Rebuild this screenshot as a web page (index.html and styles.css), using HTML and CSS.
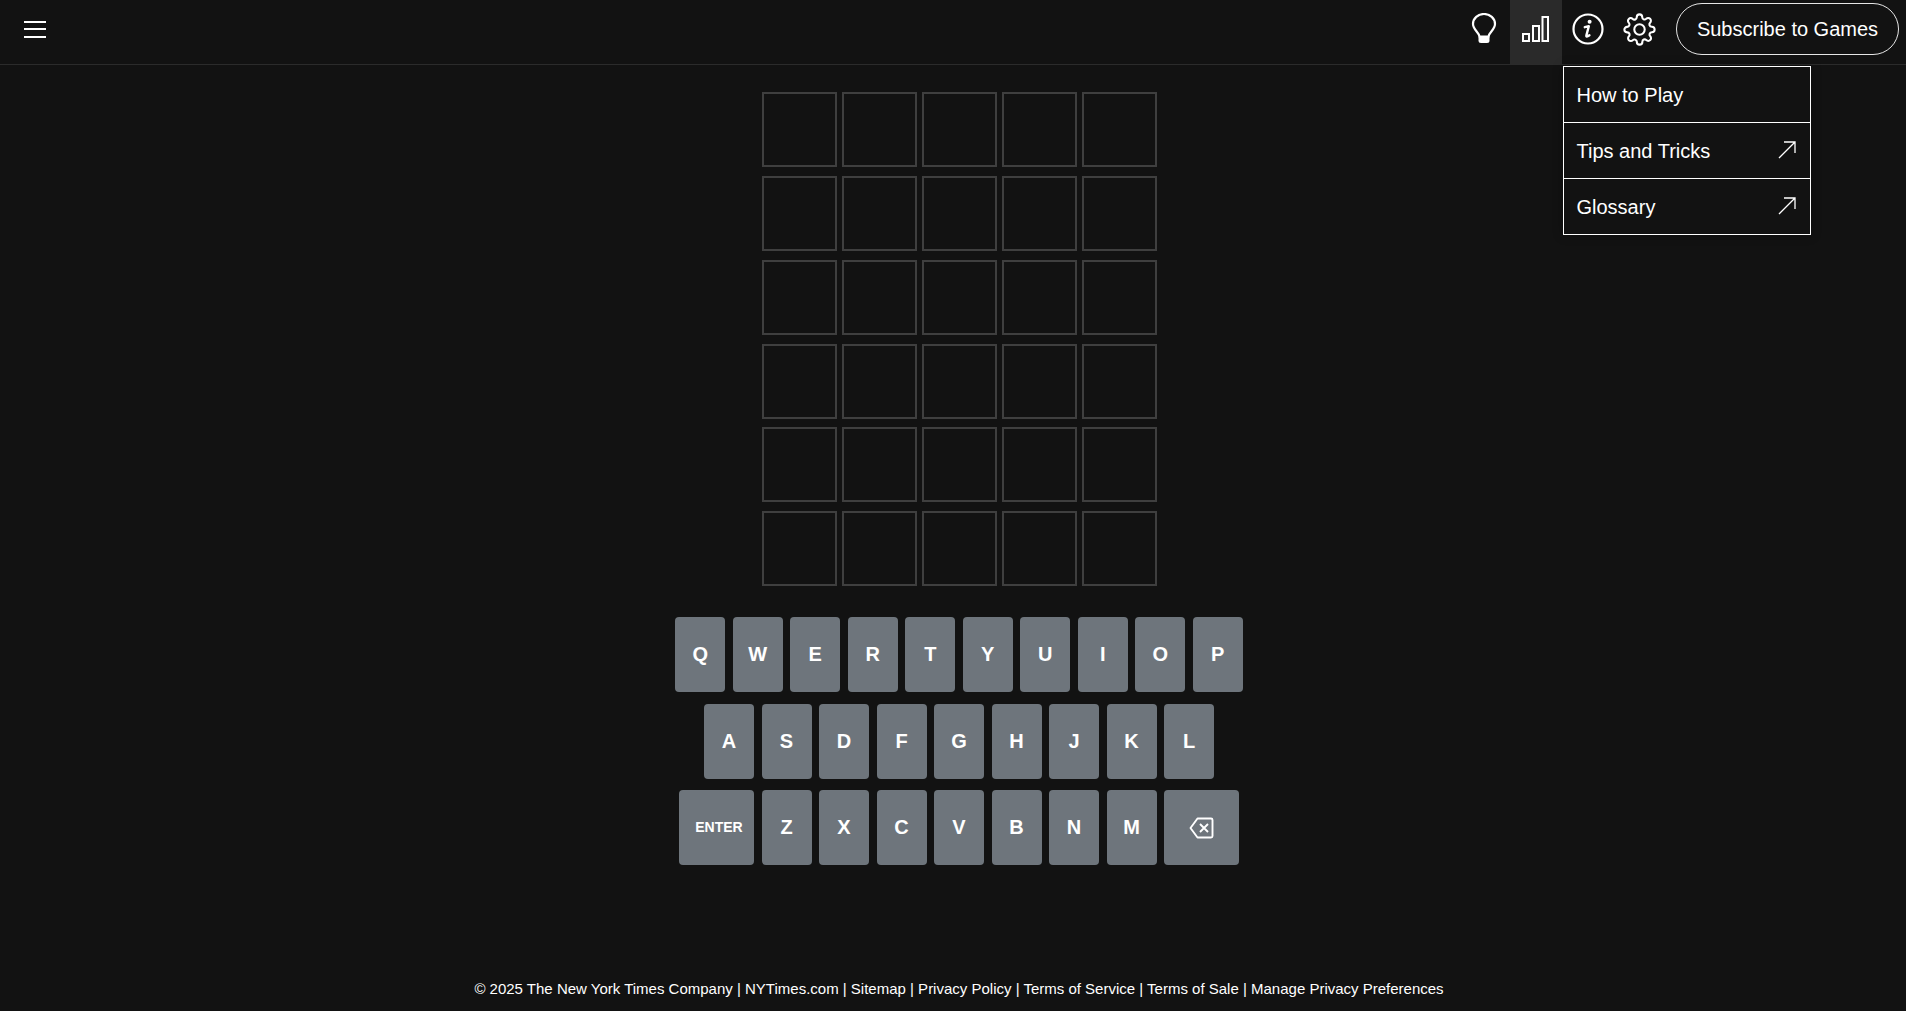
FILE: index.html
```html
<!DOCTYPE html>
<html lang="en">
<head>
  <meta charset="UTF-8" />
  <meta name="viewport" content="width=device-width, initial-scale=1.0"/>
  <title>Wordle</title>
  <link rel="stylesheet" href="styles.css">
</head>
<body>
  <header class="top-bar">
    <button class="menu-btn" aria-label="Menu">
      <span></span><span></span><span></span>
    </button>
    <div class="top-actions">
      <button class="icon-btn" aria-label="Hints">
        <svg width="26" height="32" viewBox="0 0 26 32" fill="none" stroke="#fff" stroke-width="2.2">
          <path d="M8.5 23.5C8 19.5 2 16.5 2 11a11 10 0 0 1 22 0c0 5.500-6 8.500-6.500 12.500z"/>
          <path d="M7.500 23.500h11v4a2.500 2.500 0 0 1-2.500 2.500h-6a2.500 2.500 0 0 1-2.500-2.500z" fill="#fff" stroke="none"/>
        </svg>
      </button>
      <button class="icon-btn active" aria-label="Statistics">
        <svg width="28" height="26" viewBox="0 0 28 26" fill="none" stroke="#fff" stroke-width="2">
          <rect x="1" y="18" width="6" height="7"/>
          <rect x="11" y="10" width="6" height="15"/>
          <rect x="20.500" y="1" width="5.500" height="24"/>
        </svg>
      </button>
      <button class="icon-btn" aria-label="Help">
        <svg width="32" height="32" viewBox="0 0 32 32" fill="none" stroke="#fff">
          <circle cx="16" cy="16" r="14.500" stroke-width="2.200"/>
          <path d="M12.800 14.200l4-1-2.400 9.200c-.3 1.300.6 1.700 3-.1" stroke-width="2.400" stroke-linecap="round" stroke-linejoin="round"/>
          <circle cx="17.600" cy="8.800" r="2" fill="#fff" stroke="none"/>
        </svg>
      </button>
      <button class="icon-btn gear" aria-label="Settings">
        <svg width="33" height="33" viewBox="0 0 24 24" fill="none" stroke="#fff" stroke-width="1.500" stroke-linecap="round" stroke-linejoin="round">
          <circle cx="12" cy="12" r="3.800"/>
          <path d="M19.400 15a1.650 1.650 0 0 0 .33 1.820l.06.06a2 2 0 0 1 0 2.830 2 2 0 0 1-2.830 0l-.06-.06a1.650 1.650 0 0 0-1.820-.33 1.650 1.650 0 0 0-1 1.510V21a2 2 0 0 1-2 2 2 2 0 0 1-2-2v-.09A1.650 1.650 0 0 0 9 19.400a1.650 1.650 0 0 0-1.820.33l-.06.06a2 2 0 0 1-2.830 0 2 2 0 0 1 0-2.830l.06-.06a1.650 1.650 0 0 0 .33-1.820 1.650 1.650 0 0 0-1.510-1H3a2 2 0 0 1-2-2 2 2 0 0 1 2-2h.09A1.650 1.650 0 0 0 4.600 9a1.650 1.650 0 0 0-.33-1.820l-.06-.06a2 2 0 0 1 0-2.830 2 2 0 0 1 2.830 0l.06.06a1.650 1.650 0 0 0 1.820.33H9a1.650 1.650 0 0 0 1-1.510V3a2 2 0 0 1 2-2 2 2 0 0 1 2 2v.09a1.650 1.650 0 0 0 1 1.510 1.650 1.650 0 0 0 1.820-.33l.06-.06a2 2 0 0 1 2.830 0 2 2 0 0 1 0 2.830l-.06.06a1.650 1.650 0 0 0-.33 1.820V9a1.650 1.650 0 0 0 1.510 1H21a2 2 0 0 1 2 2 2 2 0 0 1-2 2h-.09a1.650 1.650 0 0 0-1.510 1z"/>
        </svg>
      </button>
      <button class="subscribe-btn">Subscribe to Games</button>
    </div>
    <nav class="help-menu">
      <a class="help-item" href="#">How to Play</a>
      <a class="help-item" href="#">Tips and Tricks
        <svg width="18" height="18" viewBox="0 0 18 18" fill="none" stroke="#fff" stroke-width="1.300"><path d="M1 17L17 1M6 1h11v11"/></svg>
      </a>
      <a class="help-item" href="#">Glossary
        <svg width="18" height="18" viewBox="0 0 18 18" fill="none" stroke="#fff" stroke-width="1.300"><path d="M1 17L17 1M6 1h11v11"/></svg>
      </a>
    </nav>
  </header>

  <main class="game">
    <div class="board">
      <div class="tile"></div><div class="tile"></div><div class="tile"></div><div class="tile"></div><div class="tile"></div>
      <div class="tile"></div><div class="tile"></div><div class="tile"></div><div class="tile"></div><div class="tile"></div>
      <div class="tile"></div><div class="tile"></div><div class="tile"></div><div class="tile"></div><div class="tile"></div>
      <div class="tile"></div><div class="tile"></div><div class="tile"></div><div class="tile"></div><div class="tile"></div>
      <div class="tile"></div><div class="tile"></div><div class="tile"></div><div class="tile"></div><div class="tile"></div>
      <div class="tile"></div><div class="tile"></div><div class="tile"></div><div class="tile"></div><div class="tile"></div>
    </div>

    <div class="keyboard">
      <div class="key-row">
        <button class="key">Q</button><button class="key">W</button><button class="key">E</button><button class="key">R</button><button class="key">T</button><button class="key">Y</button><button class="key">U</button><button class="key">I</button><button class="key">O</button><button class="key">P</button>
      </div>
      <div class="key-row">
        <button class="key">A</button><button class="key">S</button><button class="key">D</button><button class="key">F</button><button class="key">G</button><button class="key">H</button><button class="key">J</button><button class="key">K</button><button class="key">L</button>
      </div>
      <div class="key-row">
        <button class="key wide enter">ENTER</button>
        <button class="key">Z</button><button class="key">X</button><button class="key">C</button><button class="key">V</button><button class="key">B</button><button class="key">N</button><button class="key">M</button>
        <button class="key wide" aria-label="Backspace">
          <svg width="25" height="22" viewBox="0 0 25 22" fill="none" stroke="#fff" stroke-width="1.900" stroke-linejoin="round">
            <path d="M8.500 1.500h13.500a1.500 1.500 0 0 1 1.500 1.500v16a1.500 1.500 0 0 1-1.500 1.500H8.500L1.500 11z"/>
            <path d="M11 7l8 8M19 7l-8 8"/>
          </svg>
        </button>
      </div>
    </div>
  </main>

  <footer class="site-footer">
    © 2025 The New York Times Company | NYTimes.com | Sitemap | Privacy Policy | Terms of Service | Terms of Sale | Manage Privacy Preferences
  </footer>
</body>
</html>
```

FILE: styles.css
```css
* {
  box-sizing: border-box;
}

body {
  font-family: "Liberation Sans", Arial, sans-serif;
  display: flex;
  flex-direction: column;
  height: 100vh;
  margin: 0;
  background: #121212;
  color: #fff;
  overflow: hidden;
}

button {
  font-family: inherit;
  color: #fff;
  border: none;
  background: none;
  padding: 0;
}

.top-bar {
  position: relative;
  display: flex;
  align-items: center;
  justify-content: space-between;
  flex: none;
  height: 65px;
  padding: 0 7px 0 24px;
  border-bottom: 1px solid #2b2b2b;
}

.menu-btn {
  display: flex;
  flex-direction: column;
  gap: 5.500px;
  width: 22px;
  margin-bottom: 6px;
}

.menu-btn span {
  display: block;
  height: 2px;
  background: #fff;
}

.top-actions {
  display: flex;
  align-items: flex-start;
  height: 64px;
}

.icon-btn {
  display: flex;
  align-items: center;
  justify-content: center;
  width: 52px;
  height: 64px;
  padding-bottom: 6px;
}

.icon-btn.active {
  background: #2a2a2a;
}

.icon-btn.gear {
  padding-right: 1px;
}

.subscribe-btn {
  width: 223px;
  height: 52px;
  margin: 3px 0 0 10px;
  font-size: 20px;
  border: 1px solid #e6e6e6;
  border-radius: 26px;
}

.help-menu {
  position: absolute;
  top: 66px;
  left: 1563px;
  display: flex;
  flex-direction: column;
  width: 248px;
  border: 1px solid #fff;
  background: #121212;
  box-shadow: 0 0 10px rgba(0, 0, 0, 0.3);
}

.help-item {
  display: flex;
  align-items: center;
  justify-content: space-between;
  height: 55px;
  padding: 1px 14px 0 12.500px;
  font-size: 20px;
  color: #fff;
  text-decoration: none;
}

.help-item svg {
  margin-top: -2px;
}

.help-item + .help-item {
  height: 56px;
  border-top: 1px solid #fff;
}

.game {
  flex: 1;
  display: flex;
  flex-direction: column;
  align-items: center;
  padding: 27px 0 0 12px;
}

.board {
  display: grid;
  grid-template-columns: repeat(5, 75px);
  grid-auto-rows: 75px;
  column-gap: 5px;
  row-gap: 8.850px;
}

.tile {
  border: 2px solid #3f3f3f;
}

.keyboard {
  display: flex;
  flex-direction: column;
  gap: 11.600px;
  margin-top: 30.750px;
}

.key-row {
  display: flex;
  justify-content: center;
  gap: 7.500px;
}

.key {
  display: flex;
  align-items: center;
  justify-content: center;
  width: 50px;
  height: 75px;
  font-size: 20px;
  font-weight: bold;
  background: #6e757c;
  border-radius: 4px;
}

.key.wide {
  width: 75px;
}

.key.enter {
  padding: 0 0 2px 5px;
  font-size: 14px;
}

.site-footer {
  flex: none;
  padding: 0 0 14px 12px;
  font-size: 15px;
  line-height: 17px;
  text-align: center;
}
```
